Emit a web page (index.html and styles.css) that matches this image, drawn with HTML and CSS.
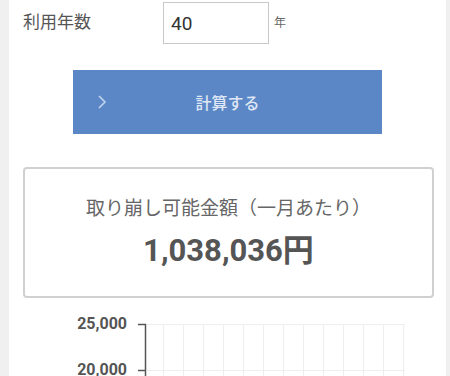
FILE: index.html
```html
<!DOCTYPE html>
<html lang="ja">
<head>
    <meta charset="UTF-8">
    <meta name="viewport" content="width=device-width, initial-scale=1.0">
    <title>取り崩し計算</title>
    <link rel="stylesheet" href="styles.css">
</head>
<body>
    <div class="page">
        <div class="form-row">
            <label class="form-label" for="years">利用年数</label>
            <input class="form-input" type="text" id="years" value="40">
            <span class="form-unit">年</span>
        </div>

        <button class="calc-button" type="button">
            <span class="calc-arrow">
                <svg width="10" height="16" viewBox="0 0 10 16">
                    <path d="M2 2 L8 8 L2 14" fill="none" stroke="#c3d4ee" stroke-width="1.6"/>
                </svg>
            </span>
            <span class="calc-text">計算する</span>
        </button>

        <div class="result-box">
            <div class="result-title">取り崩し可能金額（一月あたり）</div>
            <div class="result-value">1,038,036円</div>
        </div>

        <div class="chart">
            <svg width="437" height="70" viewBox="0 0 437 70">
                <g stroke="#eeeeee" stroke-width="1">
                    <line x1="138" y1="13.5" x2="396" y2="13.5"/>
                    <line x1="138" y1="59.5" x2="396" y2="59.5"/>
                    <line x1="154.5" y1="13" x2="154.5" y2="70"/>
                    <line x1="174.5" y1="13" x2="174.5" y2="70"/>
                    <line x1="194.5" y1="13" x2="194.5" y2="70"/>
                    <line x1="214.5" y1="13" x2="214.5" y2="70"/>
                    <line x1="234.5" y1="13" x2="234.5" y2="70"/>
                    <line x1="254.5" y1="13" x2="254.5" y2="70"/>
                    <line x1="274.5" y1="13" x2="274.5" y2="70"/>
                    <line x1="294.5" y1="13" x2="294.5" y2="70"/>
                    <line x1="314.5" y1="13" x2="314.5" y2="70"/>
                    <line x1="334.5" y1="13" x2="334.5" y2="70"/>
                    <line x1="354.5" y1="13" x2="354.5" y2="70"/>
                    <line x1="374.5" y1="13" x2="374.5" y2="70"/>
                    <line x1="394.5" y1="13" x2="394.5" y2="70"/>
                </g>
                <g stroke="#555555" stroke-width="1.5">
                    <line x1="136.5" y1="13" x2="136.5" y2="70"/>
                    <line x1="129" y1="13.5" x2="137" y2="13.5"/>
                    <line x1="129" y1="59.5" x2="137" y2="59.5"/>
                </g>
                <g class="chart-label" text-anchor="end">
                    <text x="118" y="18">25,000</text>
                    <text x="118" y="64">20,000</text>
                </g>
            </svg>
        </div>
    </div>
</body>
</html>
```

FILE: styles.css
```css
body {
    margin: 0;
    background-color: #f0f0f0;
    font-family: "Noto Sans CJK JP", "Noto Sans", sans-serif;
    color: #555;
    height: 376px;
    overflow: hidden;
}
.page {
    background-color: #fff;
    margin: 0 4px 0 9px;
    height: 376px;
    display: flex;
    flex-direction: column;
}
.page > * {
    flex-shrink: 0;
}
.form-row {
    display: flex;
    align-items: center;
    padding: 2px 0 0 14px;
}
.form-label {
    width: 140px;
    padding-bottom: 5px;
    font-size: 17px;
    color: #555;
}
.form-input {
    box-sizing: border-box;
    width: 106px;
    height: 42px;
    border: 1px solid #c8c8c8;
    padding: 0 7px;
    font-family: Roboto, "Noto Sans", sans-serif;
    font-size: 19px;
    color: #333;
    outline: none;
}
.form-unit {
    margin-left: 5px;
    padding-bottom: 4px;
    font-size: 12px;
    color: #666;
}
.calc-button {
    display: flex;
    align-items: center;
    margin: 26px 0 0 64px;
    width: 309px;
    height: 64px;
    border: none;
    background-color: #5b87c7;
    padding: 0 0 0 24px;
    cursor: pointer;
}
.calc-arrow {
    display: flex;
}
.calc-text {
    flex: 1;
    text-align: center;
    padding-right: 34px;
    font-family: "Noto Sans CJK JP", sans-serif;
    font-size: 16px;
    font-weight: 500;
    color: #dfe7f4;
}
.result-box {
    box-sizing: border-box;
    margin: 33px 12px 0 14px;
    height: 131px;
    border: 2px solid #d0d0d0;
    border-radius: 4px;
    display: flex;
    flex-direction: column;
    align-items: center;
    padding-top: 24px;
}
.result-title {
    font-size: 19px;
    color: #666;
}
.result-value {
    margin-top: 5px;
    font-family: Roboto, "Noto Sans CJK JP", sans-serif;
    font-size: 31px;
    font-weight: bold;
    color: #555;
}
.chart {
    margin-top: 13px;
}
.chart-label {
    font-family: Roboto, "Noto Sans", sans-serif;
    font-size: 16px;
    font-weight: bold;
    fill: #555;
}
```
